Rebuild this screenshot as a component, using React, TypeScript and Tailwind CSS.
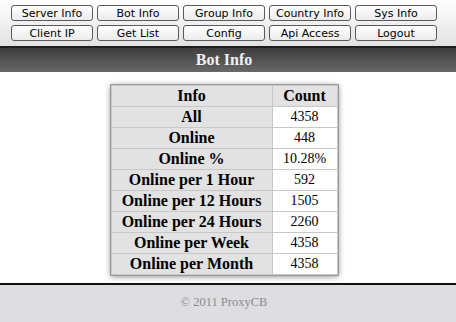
import React from "react";

const row1 = ["Server Info", "Bot Info", "Group Info", "Country Info", "Sys Info"];
const row2 = ["Client IP", "Get List", "Config", "Api Access", "Logout"];

const data: [string, string][] = [
  ["All", "4358"],
  ["Online", "448"],
  ["Online %", "10.28%"],
  ["Online per 1 Hour", "592"],
  ["Online per 12 Hours", "1505"],
  ["Online per 24 Hours", "2260"],
  ["Online per Week", "4358"],
  ["Online per Month", "4358"],
];

function Btn({ label }: { label: string }) {
  return (
    <div className="w-[82px] h-[16px] flex items-center justify-center rounded-[3px] border border-[#5a5a5a] bg-gradient-to-b from-[#ffffff] to-[#ececec] text-[11px] leading-none text-black [font-family:'DejaVu_Sans',Verdana,sans-serif]">
      {label}
    </div>
  );
}

export default function App() {
  return (
    <div className="w-[456px] h-[322px] flex flex-col bg-white overflow-hidden">
      <div className="h-[46px] bg-gradient-to-b from-[#ffffff] to-[#e2e2e2] pl-[11px] pt-[5px] flex flex-col gap-[4px]">
        <div className="flex gap-[4px]">
          {row1.map((l) => (
            <Btn key={l} label={l} />
          ))}
        </div>
        <div className="flex gap-[4px]">
          {row2.map((l) => (
            <Btn key={l} label={l} />
          ))}
        </div>
      </div>
      <div className="h-[26px] border-t-[2px] border-[#1e1e1e] bg-gradient-to-b from-[#3e3e3e] to-[#686868] flex flex-col">
        <div className="flex-1 flex items-center justify-center pr-[8px] text-[#f0f0f0] font-bold text-[16px] [font-family:'Liberation_Serif',serif]">
          Bot Info
        </div>
        <div className="h-[2px] bg-[#111]" />
        <div className="h-[1px] bg-[#8a8a8a]" />
      </div>
      <div className="flex-1 flex justify-center pt-[13px] pr-[8px]">
        <div className="h-fit ring-1 ring-[#9a9a9a] shadow-[0_1px_6px_rgba(0,0,0,0.55)]">
          <table className="border-collapse [font-family:'Liberation_Serif',serif] text-black">
            <tbody>
              <tr className="h-[21px]">
                <td className="w-[161px] bg-[#e2e2e2] border border-[#c8c8c8] text-center font-bold text-[16px] leading-none p-0">
                  Info
                </td>
                <td className="w-[65px] bg-[#e2e2e2] border border-[#c8c8c8] text-center font-bold text-[16px] leading-none p-0">
                  Count
                </td>
              </tr>
              {data.map(([k, v]) => (
                <tr key={k} className="h-[21px]">
                  <td className="bg-[#e2e2e2] border border-[#c8c8c8] text-center font-bold text-[16px] leading-none p-0">
                    {k}
                  </td>
                  <td className="bg-white border border-[#c8c8c8] text-center text-[14px] leading-none p-0">
                    {v}
                  </td>
                </tr>
              ))}
            </tbody>
          </table>
        </div>
      </div>
      <div className="h-[39px] border-t-[2px] border-[#111] bg-[#dedee2] flex items-start justify-center pt-[8px] pr-[8px] text-[12.5px] text-[#8a8a8a] [font-family:'Liberation_Serif',serif]">
        © 2011 ProxyCB
      </div>
    </div>
  );
}
